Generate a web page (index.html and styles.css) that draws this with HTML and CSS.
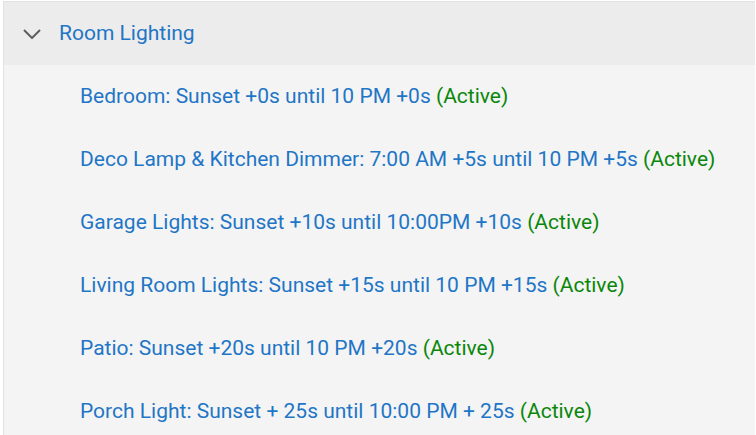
FILE: index.html
```html
<!DOCTYPE html>
<html>
<head>
<meta charset="utf-8">
<link rel="stylesheet" href="styles.css">
</head>
<body>
<div class="panel">
  <div class="header">
    <svg class="chev" width="18" height="10" viewBox="0 0 18 10"><path d="M1 1 L9 9 L17 1" fill="none" stroke="#5f5f5f" stroke-width="2"/></svg>
    <span class="title">Room Lighting</span>
  </div>
  <ul class="list">
    <li><span class="name">Bedroom: Sunset +0s until 10 PM +0s</span> <span class="status">(Active)</span></li>
    <li><span class="name">Deco Lamp &amp; Kitchen Dimmer: 7:00 AM +5s until 10 PM +5s</span> <span class="status">(Active)</span></li>
    <li><span class="name">Garage Lights: Sunset +10s until 10:00PM +10s</span> <span class="status">(Active)</span></li>
    <li><span class="name">Living Room Lights: Sunset +15s until 10 PM +15s</span> <span class="status">(Active)</span></li>
    <li><span class="name">Patio: Sunset +20s until 10 PM +20s</span> <span class="status">(Active)</span></li>
    <li><span class="name">Porch Light: Sunset + 25s until 10:00 PM + 25s</span> <span class="status">(Active)</span></li>
  </ul>
</div>
</body>
</html>
```
FILE: styles.css
```css
html, body {
  margin: 0;
  padding: 0;
  background: #ffffff;
}
body {
  font-family: Roboto, "Noto Sans", sans-serif;
  padding: 1px 1px 0 3px;
}
.panel {
  border-top: 1px solid #e2e2e2;
  border-left: 1px solid #e2e2e2;
  background: #f4f4f4;
  height: 434px;
  box-sizing: border-box;
}
.header {
  display: flex;
  align-items: center;
  height: 63px;
  background: #ececec;
  padding-left: 19px;
}
.chev {
  display: block;
  margin-top: 1px;
}
.title {
  margin-left: 18px;
  margin-bottom: 2px;
  font-size: 21px;
  color: #1f76c6;
}
.list {
  list-style: none;
  margin: 0;
  padding: 0 0 0 76px;
}
.list li {
  height: 63px;
  line-height: 63px;
  font-size: 21px;
  white-space: nowrap;
}
.name {
  color: #1f76c6;
}
.status {
  color: #0a870a;
}
```
